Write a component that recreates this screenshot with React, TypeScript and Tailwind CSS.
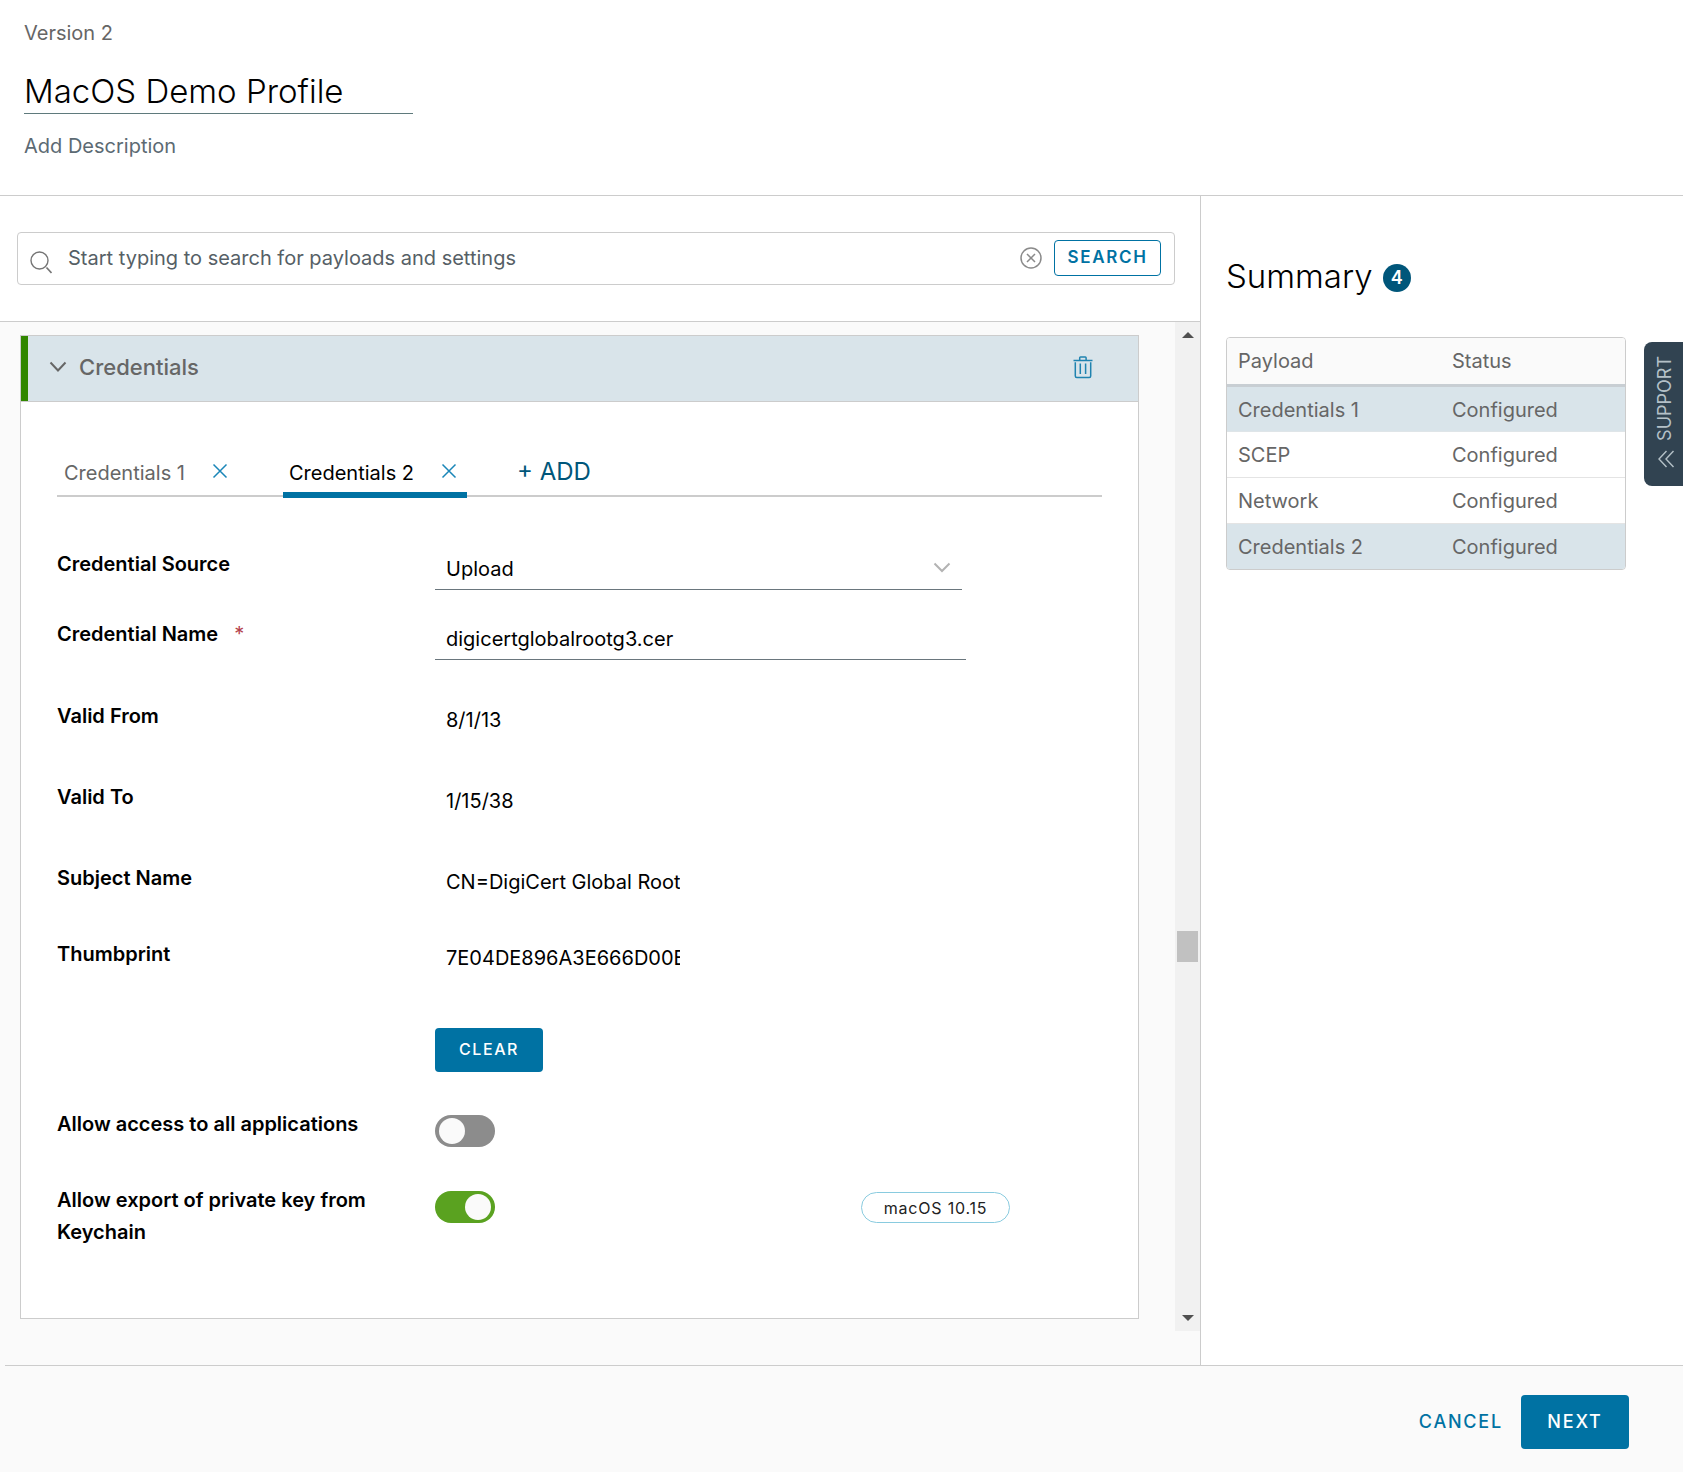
import { useState, type ReactNode } from "react";

const summaryRows = [
  { payload: "Credentials 1", status: "Configured", active: true },
  { payload: "SCEP", status: "Configured", active: false },
  { payload: "Network", status: "Configured", active: false },
  { payload: "Credentials 2", status: "Configured", active: true },
];

function CloseIcon() {
  return (
    <svg viewBox="0 0 16 16" className="mb-1 size-4" fill="none" stroke="#1a86b8" strokeWidth="1.5" aria-hidden="true">
      <path d="M1.5 1.5 14.5 14.5M14.5 1.5 1.5 14.5" />
    </svg>
  );
}

function TrashIcon() {
  return (
    <svg viewBox="0 0 20 24" className="h-6 w-5" fill="none" stroke="#1f83b0" strokeWidth="1.5" aria-hidden="true">
      <path d="M0.5 5.5H19.5" />
      <path d="M6.7 5V2.8Q6.7 2 7.5 2H12.3Q13.100 2 13.100 2.800V5" />
      <path d="M2.3 7.300V21Q2.300 22.500 3.800 22.500H16.200Q17.700 22.500 17.700 21V7.300" />
      <path d="M7.300 8.500V19M12.600 8.500V19" />
    </svg>
  );
}

function Toggle({ id, checked, onChange }: { id: string; checked: boolean; onChange: (v: boolean) => void }) {
  return (
    <input
      id={id}
      type="checkbox"
      role="switch"
      checked={checked}
      onChange={(e) => onChange(e.target.checked)}
      className="mt-[7px] block h-8 w-[60px] cursor-pointer appearance-none rounded-full bg-[#8c8c8c] before:mt-[3px] before:ml-1 before:block before:size-[26px] before:rounded-full before:bg-[#fafafa] before:content-[''] checked:bg-[#5aa220] checked:before:ml-[30px]"
    />
  );
}

function Field({ label, htmlFor, required, className, children }: {
  label: string;
  htmlFor: string;
  required?: boolean;
  className: string;
  children: ReactNode;
}) {
  return (
    <div className={"flex items-start " + className}>
      <div className="w-[378px] shrink-0 pr-14 leading-8">
        <label htmlFor={htmlFor} className="font-semibold text-black">
          {label}
        </label>
        {required && <span className="ml-4 text-[#b5424c]">*</span>}
      </div>
      {children}
    </div>
  );
}

const readOnlyInput = "h-10 w-[245px] bg-transparent pl-[11px] text-black outline-none";

export default function App() {
  const [allAccess, setAllAccess] = useState(false);
  const [allowExport, setAllowExport] = useState(true);

  return (
    <div className="flex min-h-screen flex-col bg-white font-['Inter',sans-serif] text-xl text-[#666]">
      <header className="flex flex-col items-start border-b border-[#ccc] px-6 pt-[15px] pb-[31px]">
        <p className="leading-9">Version 2</p>
        <input
          aria-label="Profile name"
          defaultValue="MacOS Demo Profile"
          className="mt-[21px] h-[42px] w-[389px] border-b border-[#5f7a7c] pb-0.5 text-[33px] font-light text-black outline-none"
        />
        <button type="button" className="mt-[14px] leading-9 text-[#5c6a73]">Add Description</button>
      </header>

      <div className="flex grow">
        <main className="flex min-w-0 grow flex-col border-r border-[#ccc] bg-[#fafafa]">
          <div className="border-b border-[#ccc] bg-white pt-9 pr-[25px] pb-9 pl-[17px]">
            <div className="flex h-[53px] items-center rounded border border-[#ccc] pr-[13px] pb-0.5 pl-3">
              <svg viewBox="0 0 22 23" className="mt-2.5 h-[23px] w-[22px] shrink-0" fill="none" stroke="#757575" strokeWidth="1.4" aria-hidden="true">
                <circle cx="9.5" cy="9.5" r="8.5" />
                <path d="M16.5 16.5 21.5 22" strokeWidth="1.7" />
              </svg>
              <input
                type="text"
                aria-label="Search payloads and settings"
                placeholder="Start typing to search for payloads and settings"
                className="ml-4 h-10 min-w-0 grow outline-none placeholder:text-[#565f66] placeholder:opacity-100"
              />
              <button type="button" aria-label="Clear search" className="mr-3">
                <svg viewBox="0 0 22 22" className="size-[22px]" fill="none" stroke="#8a8a8a" strokeWidth="1.5" aria-hidden="true">
                  <circle cx="11" cy="11" r="10" />
                  <path d="M7 7 15 15M15 7 7 15" />
                </svg>
              </button>
              <button type="button" className="h-9 w-[107px] rounded border border-[#0072a3] text-[17px] font-semibold tracking-widest text-[#0072a3]">
                SEARCH
              </button>
            </div>
          </div>

          <div className="flex grow">
            <div className="min-w-0 grow pt-[13px] pr-9 pl-5">
              <section className="min-w-0">
                <div className="flex h-[67px] items-center border border-[#ccc] bg-[#d9e4ea] pr-[45px]">
                  <div className="h-full w-[7px] bg-[#318700]" />
                  <button type="button" aria-expanded="true" className="flex items-center gap-3 pb-0.5 pl-[21px] text-[22px] font-medium">
                    <svg viewBox="0 0 18 12" className="h-3 w-[18px]" fill="none" stroke="#666" strokeWidth="2" aria-hidden="true">
                      <path d="M1.5 1.5 9 9.5 16.5 1.5" />
                    </svg>
                    Credentials
                  </button>
                  <button type="button" aria-label="Delete payload" className="ml-auto pb-1"><TrashIcon /></button>
                </div>

                <div className="border-x border-b border-[#ccc] bg-white pt-[42px] pr-9 pb-[70px] pl-9">
                  <div className="flex h-[53px] items-start border-b-2 border-[#ccc] leading-8">
                    <div className="mr-14 flex w-[171px] items-center justify-between pt-[13px] pl-[7px]">
                      <button type="button">Credentials 1</button>
                      <button type="button" aria-label="Close Credentials 1"><CloseIcon /></button>
                    </div>
                    <div className="-ml-px flex h-[54px] w-[184px] shrink-0 items-start justify-between border-b-[6px] border-[#0072a3] pt-[13px] pr-[10px] pl-[6px]">
                      <button type="button" className="text-black">Credentials 2</button>
                      <button type="button" aria-label="Close Credentials 2" className="flex h-8 items-center"><CloseIcon /></button>
                    </div>
                    <button type="button" className="ml-[50px] pt-3 text-2xl leading-8 text-[#00567a]">+ ADD</button>
                  </div>

                  <form className="pt-[51px]" onSubmit={(e) => e.preventDefault()}>
                    <Field label="Credential Source" htmlFor="source" className="min-h-[70px]">
                      <div className="relative w-[527px]">
                        <select id="source" className="block h-[42px] w-full appearance-none border-b border-[#6a767d] pl-[11px] text-black outline-none">
                          <option>Upload</option>
                        </select>
                        <svg viewBox="0 0 18 12" className="pointer-events-none absolute top-[14px] right-[11px] h-3 w-[18px]" fill="none" stroke="#b3b3b3" strokeWidth="2" aria-hidden="true">
                          <path d="M1.5 1.5 9 9 16.5 1.5" />
                        </svg>
                      </div>
                    </Field>
                    <Field label="Credential Name" htmlFor="name" required className="min-h-[82px]">
                      <input id="name" defaultValue="digicertglobalrootg3.cer" className="h-[42px] w-[531px] border-b border-[#6a767d] pl-[11px] text-black outline-none" />
                    </Field>
                    <Field label="Valid From" htmlFor="from" className="min-h-[81px]">
                      <input id="from" readOnly value="8/1/13" className={readOnlyInput} />
                    </Field>
                    <Field label="Valid To" htmlFor="to" className="min-h-[81px]">
                      <input id="to" readOnly value="1/15/38" className={readOnlyInput} />
                    </Field>
                    <Field label="Subject Name" htmlFor="subject" className="min-h-[76px]">
                      <input id="subject" readOnly value="CN=DigiCert Global Root" className={readOnlyInput} />
                    </Field>
                    <Field label="Thumbprint" htmlFor="thumb" className="min-h-[90px]">
                      <input id="thumb" readOnly value="7E04DE896A3E666D00E687D33FFAD93BE83D349E" className={readOnlyInput} />
                    </Field>
                    <button type="button" className="mb-9 ml-[378px] block h-11 w-[108px] rounded bg-[#0072a3] pb-0.5 text-base font-medium tracking-widest text-white">
                      CLEAR
                    </button>
                    <Field label="Allow access to all applications" htmlFor="access" className="min-h-[76px]">
                      <Toggle id="access" checked={allAccess} onChange={setAllAccess} />
                    </Field>
                    <Field label="Allow export of private key from Keychain" htmlFor="export" className="min-h-16">
                      <Toggle id="export" checked={allowExport} onChange={setAllowExport} />
                      <span className="mt-2 ml-[366px] flex h-[31px] w-[149px] items-center justify-center rounded-full border border-[#89cbdf] text-base tracking-wider text-[#222]">
                        macOS 10.15
                      </span>
                    </Field>
                  </form>
                </div>
              </section>
            </div>

            <div aria-hidden="true" className="mb-[34px] flex w-[25px] shrink-0 flex-col items-center bg-[#f1f1f1] py-[10px]">
              <svg viewBox="0 0 12 6" className="h-1.5 w-3" fill="#505050"><path d="M6 0 12 6H0Z" /></svg>
              <div className="grow-[593]" />
              <div className="h-[31px] w-[21px] bg-[#c1c1c1]" />
              <div className="grow-[353]" />
              <svg viewBox="0 0 12 6" className="h-1.5 w-3" fill="#505050"><path d="M0 0H12L6 6Z" /></svg>
            </div>
          </div>
        </main>

        <aside className="flex w-[482px] shrink-0 items-start">
          <div className="min-w-0 grow pt-[60px] pl-[25px]">
            <h2 className="flex items-center gap-[10px] text-[33px] leading-10 font-light text-black">
              Summary
              <span className="mt-1 flex size-7 items-center justify-center rounded-full bg-[#00567a] text-lg font-semibold text-white">4</span>
            </h2>
            <div className="mt-[41px] overflow-hidden rounded border border-[#ccc]">
              <table className="w-full table-fixed border-collapse text-left">
                <thead>
                  <tr className="h-[47px] border-b-[3px] border-[#c8ced3] bg-[#fafafa]">
                    <th className="w-[214px] pl-[11px] font-normal">Payload</th>
                    <th className="pl-[11px] font-normal">Status</th>
                  </tr>
                </thead>
                <tbody>
                  {summaryRows.map((row) => (
                    <tr key={row.payload} className={row.active ? "h-[46px] border-b border-[#dfe5e8] bg-[#d9e4ea] last:border-b-0" : "h-[46px] border-b border-[#e4e4e4]"}>
                      <td className="pt-0.5 pl-[11px]">{row.payload}</td>
                      <td className="pt-0.5 pl-[11px]">{row.status}</td>
                    </tr>
                  ))}
                </tbody>
              </table>
            </div>
          </div>
          <button type="button" className="mt-[146px] ml-[18px] flex h-36 w-[39px] shrink-0 flex-col items-center justify-between rounded-l-lg bg-[#314351] pt-[14px] pb-[18px] pl-0.5 text-lg text-[#b4c0c7]">
            <span className="rotate-180 leading-5 [writing-mode:vertical-rl]">SUPPORT</span>
            <svg viewBox="0 0 18 18" className="ml-0.5 size-[18px]" fill="none" stroke="#b4c0c7" strokeWidth="1.4" aria-hidden="true">
              <path d="M9.5 1 2 9 9.5 17M16.5 1 9 9 16.5 17" />
            </svg>
          </button>
        </aside>
      </div>

      <footer className="flex bg-[#fafafa] pl-[5px]">
        <div className="flex h-[107px] grow items-center justify-end gap-[18px] border-t border-[#ccc] pt-1.5 pr-[54px]">
          <button type="button" className="text-lg font-medium tracking-widest text-[#0072a3]">CANCEL</button>
          <button type="button" className="h-[54px] w-[108px] rounded bg-[#0072a3] text-lg font-medium tracking-widest text-white">NEXT</button>
        </div>
      </footer>
    </div>
  );
}
